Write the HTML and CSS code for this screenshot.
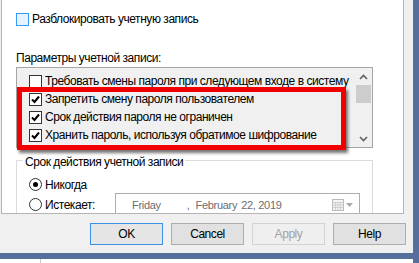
FILE: index.html
```html
<!DOCTYPE html>
<html lang="ru">
  <head>
    <meta charset="UTF-8" />
    <title>Свойства учетной записи</title>
    <link rel="stylesheet" href="styles.css">
  </head>
  <body>
    <div class="screen">
      <div class="frame">
        <div class="tabpage">
          <div class="check-row">
            <span class="box hot"></span>
            <span>Разблокировать учетную запись</span>
          </div>

          <div class="caption">Параметры учетной записи:</div>

          <div class="listbox">
            <ul class="items">
              <li><span class="box"></span>Требовать смены пароля при следующем входе в систему</li>
              <li>
                <span class="box"><svg viewBox="0 0 11 11" width="11" height="11"><path d="M2 5.5 L4.5 8 L9 2.5" /></svg></span>
                Запретить смену пароля пользователем
              </li>
              <li>
                <span class="box"><svg viewBox="0 0 11 11" width="11" height="11"><path d="M2 5.5 L4.5 8 L9 2.5" /></svg></span>
                Срок действия пароля не ограничен
              </li>
              <li>
                <span class="box"><svg viewBox="0 0 11 11" width="11" height="11"><path d="M2 5.5 L4.5 8 L9 2.5" /></svg></span>
                Хранить пароль, используя обратимое шифрование
              </li>
            </ul>
            <div class="scrollbar">
              <span class="arrow"><svg viewBox="0 0 9 6" width="9" height="6"><path d="M1 5 L4.5 1.5 L8 5" /></svg></span>
              <span class="thumb"></span>
              <span class="track"></span>
              <span class="arrow"><svg viewBox="0 0 9 6" width="9" height="6"><path d="M1 1 L4.5 4.5 L8 1" /></svg></span>
            </div>
          </div>

          <fieldset class="group">
            <legend>Срок действия учетной записи</legend>
            <div class="radio-row first">
              <span class="radio on"></span>
              <span>Никогда</span>
            </div>
            <div class="radio-row">
              <span class="radio"></span>
              <span class="expire-label">Истекает:</span>
              <div class="datepicker">
                <span class="day">Friday</span>
                <span class="comma">,</span>
                <span class="month">February</span>
                <span class="date">22, 2019</span>
                <span class="cal">
                  <svg viewBox="0 0 12 12" width="12" height="12">
                    <rect x="0.5" y="0.5" width="11" height="11" fill="#f4f4f4" stroke="#b8b8b8" />
                    <path d="M0.5 3.5 H11.5 M0.5 6 H11.5 M0.5 8.5 H11.5 M3.5 3.5 V11.5 M6 3.5 V11.5 M8.5 3.5 V11.5" stroke="#cfcfcf" />
                  </svg>
                  <svg viewBox="0 0 7 4" width="7" height="4"><path d="M0 0 H7 L3.5 4 Z" fill="#a8a8a8" /></svg>
                </span>
              </div>
            </div>
          </fieldset>

          <!-- красная рамка поверх списка -->
          <div class="highlight"></div>
        </div>

        <div class="actions">
          <button class="default">OK</button>
          <button>Cancel</button>
          <button class="disabled">Apply</button>
          <button>Help</button>
        </div>
      </div>
      <div class="taskstrip"></div>
    </div>
  </body>
</html>
```

FILE: styles.css
```css
* {
  box-sizing: border-box;
}

body {
  margin: 0;
  width: 419px;
  height: 263px;
  overflow: hidden;
  background: #ffffff;
  font-family: "Liberation Sans", Arial, sans-serif;
  font-size: 12px;
  letter-spacing: -0.45px;
  color: #000000;
}

.screen {
  display: flex;
  flex-direction: column;
  width: 419px;
  height: 263px;
}

.frame {
  width: 419px;
  height: 259px;
  padding-left: 1px;
  background: #f0f0f0;
  border-right: 6px solid #566e9c;
  border-bottom: 6px solid #566e9c;
}

.tabpage {
  position: relative;
  width: 403px;
  height: 214px;
  padding: 12px 0 0 14px;
  overflow: hidden;
  background: #ffffff;
  border: 1px solid #b4b4b4;
  border-top: 0;
}

.check-row {
  display: flex;
  align-items: center;
  gap: 3px;
  height: 14px;
  white-space: nowrap;
}

.box {
  display: flex;
  align-items: center;
  justify-content: center;
  flex: none;
  width: 13px;
  height: 13px;
  background: #ffffff;
  border: 1px solid #333333;
}

.box path {
  fill: none;
  stroke: #000000;
  stroke-width: 2;
}

.box.hot {
  background: #e8f2fd;
  border-color: #3399ff;
}

.caption {
  margin-top: 25px;
  line-height: 14px;
}

.listbox {
  display: flex;
  width: 357px;
  height: 81px;
  margin-top: 2px;
  background: #f0f0f0;
  border: 1px solid #a5a5a5;
}

.items {
  flex: 1;
  margin: 0;
  padding: 4px 0 0 12px;
  list-style: none;
  overflow: hidden;
}

.items li {
  display: flex;
  align-items: center;
  gap: 3px;
  height: 18px;
  white-space: nowrap;
}

.scrollbar {
  display: flex;
  flex-direction: column;
  width: 17px;
}

.arrow {
  display: flex;
  align-items: center;
  justify-content: center;
  height: 17px;
}

.arrow path {
  fill: none;
  stroke: #606060;
  stroke-width: 1.6;
}

.thumb {
  height: 18px;
  margin: 0 1px;
  background: #cdcdcd;
}

.track {
  flex: 1;
}

.group {
  width: 357px;
  margin: 3px 0 0;
  padding: 0;
  min-width: 0;
  border: 1px solid #dcdcdc;
}

.group legend {
  margin-left: 6px;
  padding: 4px 2px 0;
  line-height: 14px;
}

.radio-row {
  display: flex;
  align-items: center;
  height: 23px;
  margin: 1px 0 0 12px;
  white-space: nowrap;
}

.radio-row.first {
  height: 15px;
  margin-top: 8px;
}

.radio {
  display: flex;
  align-items: center;
  justify-content: center;
  flex: none;
  width: 13px;
  height: 13px;
  margin-right: 3px;
  background: #ffffff;
  border: 1px solid #333333;
  border-radius: 50%;
}

.radio.on::after {
  content: "";
  width: 5px;
  height: 5px;
  background: #000000;
  border-radius: 50%;
}

.expire-label {
  width: 70px;
}

.datepicker {
  display: flex;
  align-items: center;
  width: 245px;
  height: 23px;
  padding-left: 16px;
  font-size: 11px;
  letter-spacing: -0.3px;
  color: #6d6d6d;
  border: 1px solid #adadad;
}

.comma {
  margin-left: 26px;
}

.month {
  margin-left: 6px;
}

.date {
  margin-left: 4px;
}

.cal {
  display: flex;
  align-items: center;
  gap: 2px;
  margin-left: auto;
  margin-right: 6px;
}

.highlight {
  position: absolute;
  left: 15px;
  top: 87px;
  width: 329px;
  height: 63px;
  border: 5px solid #f20000;
  box-shadow: 2px 3px 3px rgba(0, 0, 0, 0.55);
}

.actions {
  display: flex;
  justify-content: flex-end;
  gap: 8px;
  padding: 9px 7px 0 0;
}

button {
  width: 73px;
  height: 22px;
  padding: 0;
  font: inherit;
  letter-spacing: inherit;
  color: #000000;
  background: #e1e1e1;
  border: 1px solid #adadad;
}

button.default {
  border-color: #3c90e6;
  background: #e5e5e5;
}

button.disabled {
  color: #a3a3a3;
  background: #efefef;
  border-color: #d3d3d3;
}

.taskstrip {
  position: relative;
  height: 4px;
  background: #ffffff;
  border-right: 6px solid #566e9c;
}

.taskstrip::before {
  content: "";
  position: absolute;
  left: 40px;
  top: 0;
  width: 1px;
  height: 4px;
  background: #c8c8c8;
}
```
